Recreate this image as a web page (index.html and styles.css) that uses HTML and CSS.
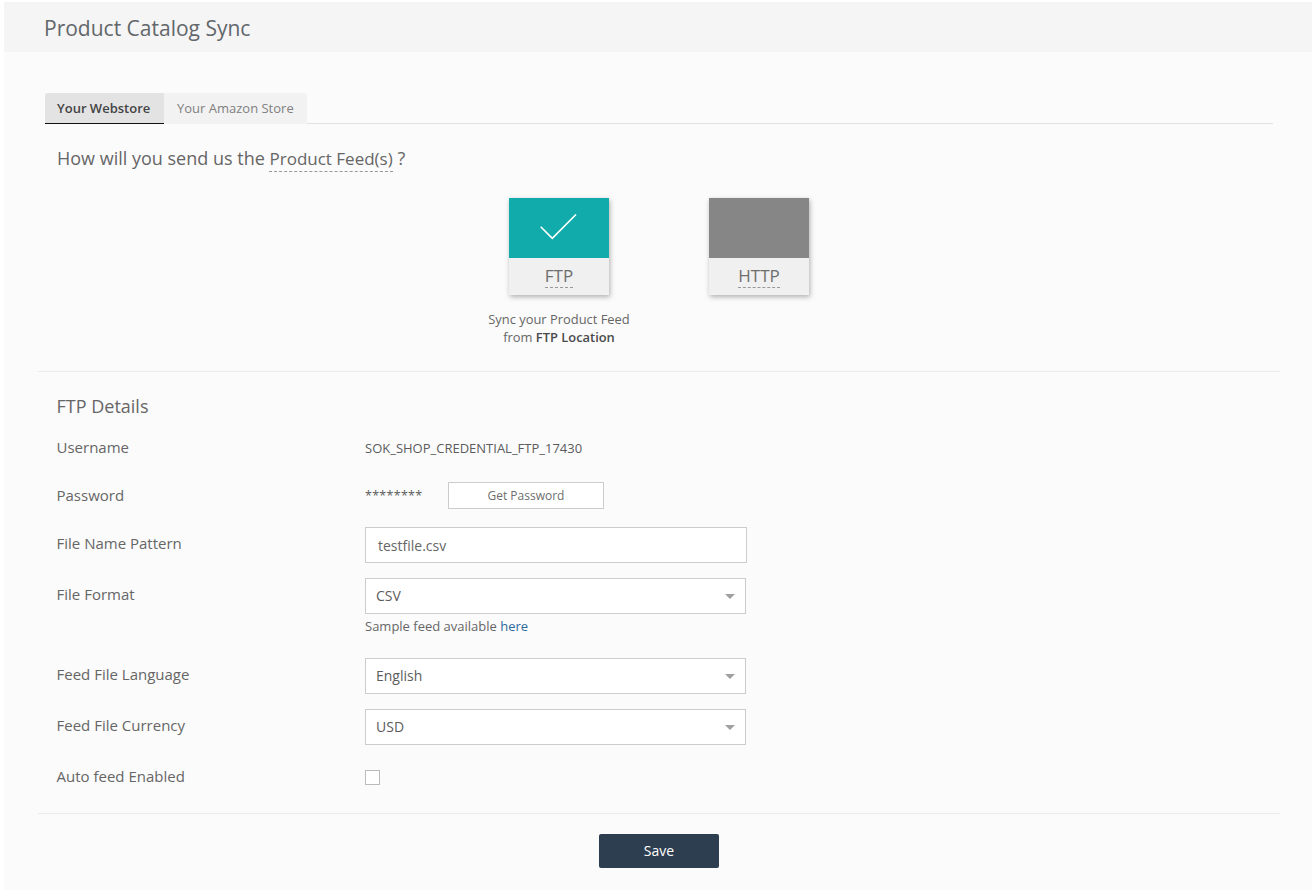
FILE: index.html
```html
<!DOCTYPE html>
<html lang="en">
<head>
<meta charset="utf-8">
<title>Product Catalog Sync</title>
<link rel="stylesheet" href="styles.css">
</head>
<body>
<main class="page">
  <header class="page-header"><h1>Product Catalog Sync</h1></header>
  <nav class="tabs">
    <a class="tab tab-active">Your Webstore</a>
    <a class="tab">Your Amazon Store</a>
  </nav>
  <section class="method">
    <h2 class="question">How will you send us the <span class="hint">Product Feed(s)</span> ?</h2>
    <div class="options">
      <div class="option">
        <div class="tile">
          <div class="tile-top tile-selected">
            <svg class="check" width="38" height="28" viewBox="0 0 38 28"><path d="M.7 12.7 L12.3 24.3 L36 .5" fill="none" stroke="#fff" stroke-width="1.6"/></svg>
          </div>
          <div class="tile-label"><span>FTP</span></div>
        </div>
        <p class="caption">Sync your Product Feed<br>from <b>FTP Location</b></p>
      </div>
      <div class="option">
        <div class="tile">
          <div class="tile-top"></div>
          <div class="tile-label"><span>HTTP</span></div>
        </div>
      </div>
    </div>
  </section>
  <section class="details">
    <h3 class="details-title">FTP Details</h3>
    <div class="row row-user">
      <label>Username</label>
      <div class="value small">SOK_SHOP_CREDENTIAL_FTP_17430</div>
    </div>
    <div class="row row-pass">
      <label>Password</label>
      <div class="value small pass"><span class="stars">********</span><button class="btn-outline">Get Password</button></div>
    </div>
    <div class="row row-file">
      <label>File Name Pattern</label>
      <div class="value"><div class="input">testfile.csv</div></div>
    </div>
    <div class="row row-format">
      <label>File Format</label>
      <div class="value">
        <div class="select">CSV<i class="arrow"></i></div>
        <p class="note">Sample feed available <a class="link">here</a></p>
      </div>
    </div>
    <div class="row row-select">
      <label>Feed File Language</label>
      <div class="value"><div class="select">English<i class="arrow"></i></div></div>
    </div>
    <div class="row row-select">
      <label>Feed File Currency</label>
      <div class="value"><div class="select">USD<i class="arrow"></i></div></div>
    </div>
    <div class="row row-check">
      <label>Auto feed Enabled</label>
      <div class="value"><span class="checkbox"></span></div>
    </div>
  </section>
  <footer class="actions"><button class="btn-save">Save</button></footer>
</main>
</body>
</html>
```
FILE: styles.css
```css
* { box-sizing: border-box; }
html, body { margin: 0; padding: 0; background: #fff; }
body { font-family: "Open Sans", sans-serif; color: #555; height: 890px; overflow: hidden; }
.page { margin: 2px 0 0 4px; height: 888px; background: #fbfbfb; }
.page-header { height: 50px; background: #f5f5f5; padding: 2px 0 0 40px; display: flex; align-items: center; }
.page-header h1 { margin: 0; font-size: 21px; font-weight: 400; color: #62676b; line-height: 48px; }
.tabs { margin: 41px 39px 0 41px; height: 31px; display: flex; border-bottom: 1px solid #e2e2e2; }
.tab { height: 31px; font-size: 13px; line-height: 30px; padding: 0 13px; background: #f2f2f2; color: #808080; border-radius: 0 3px 0 0; }
.tab-active { width: 119px; padding: 0 12px; background: #e3e3e3; color: #444; font-weight: 600; border-bottom: 1px solid #111; border-radius: 3px 0 0 0; }
.method { margin: 0 32px 0 34px; height: 248px; border-bottom: 1px solid #ebebeb; }
.question { margin: 0; padding: 22px 0 0 19px; font-size: 18px; line-height: 25px; font-weight: 400; color: #666; height: 74px; }
.hint { font-size: 17px; border-bottom: 1px dashed #999; padding-bottom: 1px; }
.options { display: flex; justify-content: center; }
.option { width: 200px; display: flex; flex-direction: column; align-items: center; }
.tile { width: 100px; height: 97px; background: #f0f0f0; box-shadow: 1px 2px 5px rgba(0,0,0,.3); }
.tile-top { height: 60px; background: #868686; display: flex; align-items: center; justify-content: center; }
.tile-selected { background: #12abab; }
.tile-label { height: 37px; text-align: center; font-size: 17px; color: #6e6e6e; }
.tile-label span { display: inline-block; line-height: 21px; margin-top: 7px; padding-bottom: 1px; border-bottom: 1px dashed #999; }
.caption { margin: 15px 0 0; width: 200px; text-align: center; font-size: 12.9px; line-height: 18px; color: #666; }
.caption b { font-weight: 600; color: #4a4a4a; }
.details { margin: 0 32px 0 34px; height: 442px; border-bottom: 1px solid #ebebeb; padding-left: 18.5px; }
.details-title { margin: 0; padding-top: 22px; height: 61px; font-size: 18px; line-height: 25px; font-weight: 400; color: #666; }
.row { display: flex; }
.row label { width: 308.5px; flex: none; margin-top: -1px; font-size: 15px; line-height: 20px; color: #666; }
.value { font-size: 14px; color: #5c5c5c; }
.small { font-size: 13px; }
.row-user { height: 48px; padding-top: 5px; }
.row-user .value { line-height: 20px; }
.row-pass { height: 49px; padding-top: 5px; }
.pass { display: flex; align-items: flex-start; line-height: 20px; }
.stars { width: 83px; font-size: 12.5px; letter-spacing: .3px; }
.btn-outline { width: 156px; height: 27px; margin-top: -4px; background: #fff; border: 1px solid #ccc; font: 400 12px "Open Sans", sans-serif; color: #6e6e6e; padding: 0; }
.row-file { height: 49px; }
.row-file label { padding-top: 4px; }
.row-file .value { margin-top: -3px; }
.input { width: 382px; height: 36px; background: #fff; border: 1px solid #ccc; padding: 1px 12px 0; line-height: 34px; color: #666; }
.row-format { height: 79px; }
.row-format label { padding-top: 6px; }
.row-format .value { margin-top: -1px; }
.select { position: relative; width: 381px; height: 36px; background: #fff; border: 1px solid #ccc; padding: 0 10px; line-height: 34px; color: #5c5c5c; }
.arrow { position: absolute; right: 10px; top: 15px; width: 0; height: 0; border-left: 5px solid transparent; border-right: 5px solid transparent; border-top: 5px solid #a0a0a0; }
.note { margin: 3px 0 0; font-size: 13px; line-height: 18px; color: #666; }
.link { color: #2b6a9e; }
.row-select { height: 51px; }
.row-select label { padding-top: 7px; }
.row-check { padding-top: 7px; }
.checkbox { display: block; width: 15px; height: 15px; margin-top: 3px; background: #fff; border: 1px solid #bbb; }
.actions { display: flex; justify-content: center; padding-top: 20px; width: 1310px; }
.btn-save { width: 120px; height: 34px; padding: 0 0 2px; background: #2c3e50; color: #fff; border: 0; border-radius: 2px; font: 400 14px "Open Sans", sans-serif; }
```
